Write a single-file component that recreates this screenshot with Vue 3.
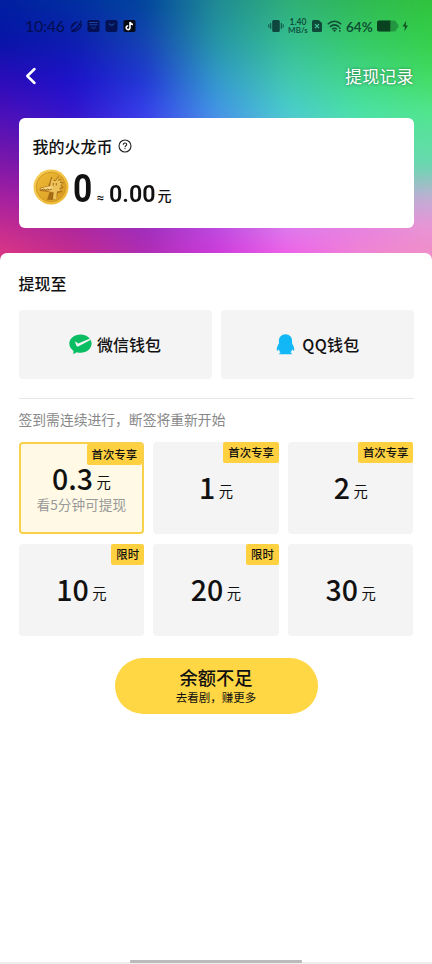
<script setup>
// The backdrop bleeds past the screen edges so that its blur never thins out at them.
const BLEED = 24
const stops = [
  { y: 0, c: ['#001fa0', '#002fa0', '#00459c', '#1f8a94', '#2fae78', '#2fb954', '#30c33c'] },
  { y: 40, c: ['#0714a8', '#0c1eae', '#1443b2', '#2595a6', '#35be90', '#37c968', '#35cf4a'] },
  { y: 80, c: ['#2c0cb8', '#1d12ca', '#2238d4', '#3399cc', '#43c8b0', '#42d988', '#43dd66'] },
  { y: 115, c: ['#4c10b8', '#3414cc', '#3840ec', '#4494e8', '#4acdd0', '#4ce2a8', '#52e690'] },
  { y: 165, c: ['#8018a8', '#7018b0', '#6030d0', '#8070e0', '#90a0d8', '#68d8b0', '#68d8b0'] },
  { y: 200, c: ['#a821a0', '#9820a0', '#8030c0', '#a050e0', '#c080e0', '#c0a8d8', '#c4acd6'] },
  { y: 228, c: ['#c42c90', '#b0289c', '#a02ebc', '#be4ae0', '#de7cec', '#e980e2', '#ea94d4'] },
  { y: 256, c: ['#dc3884', '#c62c8c', '#b02cb0', '#ce38da', '#f05ee8', '#f084d0', '#f08ec6'] },
]
const layers = stops.map((s, i) => {
  const colors = s.c.map((c, n) => `${c} ${BLEED + n * 72}px`).join(', ')
  const mask = i
    ? `linear-gradient(to bottom, transparent ${stops[i - 1].y + BLEED}px, #000 ${s.y + BLEED}px)`
    : 'none'
  return { background: `linear-gradient(to right, ${colors})`, maskImage: mask }
})

const plans = [
  { amount: '0.3', tag: '首次专享', note: '看5分钟可提现', active: true },
  { amount: '1', tag: '首次专享' },
  { amount: '2', tag: '首次专享' },
  { amount: '10', tag: '限时' },
  { amount: '20', tag: '限时' },
  { amount: '30' },
]
</script>

<template>
  <div class="screen">
    <div class="aurora">
      <div v-for="(l, i) in layers" :key="i" class="layer" :style="l"></div>
    </div>

    <div class="content">
      <header class="status">
        <span class="time">10:46</span>
        <svg class="apps" width="68" height="14" viewBox="0 0 68 14">
          <path d="M2 10.500C.3 6 5.500 1.300 10 2.600C8.500 3.600 6.500 4.600 5 6.300C3.600 7.800 2.800 9.200 2 10.500Z" fill="currentColor" />
          <path d="M2.300 11.800C6.500 13.500 12.500 9.500 12.300 4.600M2.300 11.800C6 11 10 7.500 12.300 1.800" fill="none" stroke="currentColor" stroke-width="1.400" />
          <rect x="18.500" y="1" width="12" height="12" rx="1.800" fill="currentColor" />
          <path d="M20 3.500H29M20.500 5.800H28.500M22.300 8Q24.500 11 26.700 8" fill="none" stroke="#1742a6" stroke-width="1" />
          <rect x="36.500" y="1" width="12" height="12" rx="2.200" fill="currentColor" />
          <path d="M39.800 4.500Q42.500 8 45.200 4.500" fill="none" stroke="#1c57a6" stroke-width="1.200" />
          <rect x="54.500" y="1" width="12" height="12" rx="1.800" fill="#080b16" />
          <path d="M61 3V8.700A1.900 1.900 0 1 1 59.200 6.800M61 3Q61.400 5.300 64 5.500" fill="none" stroke="#fff" stroke-width="1.600" />
        </svg>
        <span class="grow"></span>
        <svg class="vib" width="16" height="14" viewBox="0 0 16 14">
          <rect x="4.200" y="1" width="7.600" height="12" rx="1.600" fill="currentColor" />
          <path d="M2.700 4V10M.8 5.500V8.500M13.300 4V10M15.200 5.500V8.500" stroke="currentColor" stroke-width="1" />
        </svg>
        <span class="speed"><b>1.40</b><b>MB/s</b></span>
        <svg class="sim" width="10" height="12" viewBox="0 0 10 12">
          <path d="M1.500 0H6.500L10 3V10.500Q10 12 8.500 12H1.500Q0 12 0 10.500V1.500Q0 0 1.500 0Z" fill="currentColor" />
          <path d="M3 4.200L7 8.200M7 4.200L3 8.200" stroke="#46c59a" stroke-width="1.200" />
        </svg>
        <svg class="wifi" width="16" height="13" viewBox="0 0 16 13">
          <g fill="none" stroke="currentColor" stroke-width="1.500">
            <path d="M.7 4.300Q7.500 -1.800 14.300 4.300" />
            <path d="M2.900 6.900Q7.500 2.900 12.100 6.900" />
            <path d="M5 9.300Q7.500 7.100 10 9.300" />
          </g>
          <path d="M5.900 10.300Q7.500 9.200 9.100 10.300L7.500 12Z" fill="currentColor" />
          <path d="M12.800 7.300V9M12.800 10V11.700" stroke="currentColor" stroke-width="1.400" />
        </svg>
        <span class="pct">64%</span>
        <svg class="batt" width="32" height="12" viewBox="0 0 32 12">
          <path d="M2 .5H17Q19.500 .5 19.500 3L21.300 4.500V7.500L19.500 9Q19.500 11.500 17 11.500H2Q0 11.500 0 9.500V2.500Q0 .5 2 .5Z" fill="currentColor" opacity=".42" />
          <path d="M2 .5H13.300V11.500H2Q0 11.500 0 9.500V2.500Q0 .5 2 .5Z" fill="currentColor" />
          <path d="M29.300 .8L25.500 6.500H28L27.300 11.300L31 5.400H28.600Z" fill="currentColor" />
        </svg>
      </header>

      <nav class="nav">
        <svg width="12" height="18" viewBox="0 0 12 18">
          <path d="M9.500 2L2.300 9L9.500 16" fill="none" stroke="#fff" stroke-width="2.500" stroke-linecap="round" stroke-linejoin="round" />
        </svg>
        <span class="record">提现记录</span>
      </nav>

      <section class="wallet">
        <div class="wallet-title">
          <span>我的火龙币</span>
          <svg width="14" height="14" viewBox="0 0 14 14" fill="none" stroke="#222">
            <circle cx="7" cy="7" r="6" stroke-width="1.100" />
            <path d="M5.300 5.700Q5.300 4 7 4Q8.700 4 8.700 5.500Q8.700 6.400 7.600 7Q7 7.400 7 8.300M7 9.200V10.300" stroke-width="1.100" />
          </svg>
        </div>
        <div class="balance">
          <svg class="coin" width="36" height="36" viewBox="0 0 36 36">
            <defs>
              <linearGradient id="rim" x1="0" y1="0" x2="1" y2="1">
                <stop offset="0" stop-color="#f6cf59" /><stop offset="1" stop-color="#edb52f" />
              </linearGradient>
              <linearGradient id="face" x1="0" y1="0" x2="1" y2="1">
                <stop offset="0" stop-color="#efbc35" /><stop offset="1" stop-color="#d69722" />
              </linearGradient>
            </defs>
            <circle cx="18" cy="18" r="17.500" fill="url(#rim)" />
            <circle cx="18" cy="18" r="14.800" fill="url(#face)" stroke="#cf9624" stroke-width=".9" />
            <path d="M14 31L16.500 23L7 22Q5.800 19.500 7.500 18.500L15 17L17 12L18.200 7.500L20.500 11H22.500L25.500 6.500V11L28.500 9.500L27.500 13L31 13.500L28.500 16.500L31 18.500L27.500 20L29.500 23L25 24L22.500 31Z" fill="#ad7319" />
            <path d="M15.500 22.500L17 17.500L18 12.500L19.200 9L20.800 12H23L25.200 8V12L28 11L26.800 14L29.800 14.500L27 16.500L29 18L26 19L28 21.500L24 22.500L23 30.500H20L20.500 23Z" fill="#edc25a" />
            <path d="M7.500 19.200L16 17.200L20 18L19 21.500L8 21Z" fill="#f6d682" />
            <path d="M8 21L11 20L12.500 21L14.500 20L16.500 21L19 20M20.300 14V16.500M23.300 14V16.500M17.500 24L16.500 30M20 24L18.800 30" stroke="#99600f" stroke-width=".9" fill="none" />
          </svg>
          <span class="coins">0</span>
          <span class="approx">≈</span>
          <span class="cash">0.00</span>
          <span class="yuan">元</span>
        </div>
      </section>

      <main class="sheet">
        <h2>提现至</h2>
        <div class="methods">
          <div class="method">
            <svg width="23" height="21" viewBox="0 0 23 21">
              <path d="M11.500 .5C5.200 .5 .3 4.500 .3 9.600C.3 12.600 2 15.200 4.500 16.900L4.300 20.200L7.800 18.300Q9.600 18.800 11.500 18.800C17.800 18.800 22.600 14.700 22.600 9.600C22.600 4.500 17.800 .5 11.500 .5Z" fill="#09bd63" />
              <path d="M5.800 7.300L9.300 9.600L21 4.600L21.800 5.800L9.200 12.400Q7.900 12.900 7.300 11.600Z" fill="#f4f4f4" />
            </svg>
            <span>微信钱包</span>
          </div>
          <div class="method qq">
            <svg width="19" height="21" viewBox="0 0 19 21">
              <path d="M9.500 .3C5.500 .3 2.900 3.300 2.900 7V9.500C1.700 11.500 .7 13.600 .7 15.700C.7 17 1.500 17 2.700 15.600Q3.300 17.200 4.600 18.300Q3 18.800 3.300 20.300H15.700Q16 18.800 14.400 18.300Q15.700 17.200 16.300 15.600C17.500 17 18.300 17 18.300 15.700C18.300 13.600 17.300 11.500 16.100 9.500V7C16.100 3.300 13.500 .3 9.500 .3Z" fill="#12b7f5" />
            </svg>
            <span>QQ钱包</span>
          </div>
        </div>
        <p class="hint">签到需连续进行，断签将重新开始</p>
        <div class="plans">
          <div v-for="p in plans" :key="p.amount" class="plan" :class="{ active: p.active }">
            <span v-if="p.tag" class="tag">{{ p.tag }}</span>
            <div class="price"><span class="num">{{ p.amount }}</span><span class="unit">元</span></div>
            <div v-if="p.note" class="note">{{ p.note }}</div>
          </div>
        </div>
        <button class="cta">
          <span class="cta-main">余额不足</span>
          <span class="cta-sub">去看剧，赚更多</span>
        </button>
      </main>
      <footer class="home"><i></i></footer>
    </div>
  </div>
</template>

<style>
body { margin: 0; background: #fff; }
</style>

<style scoped>
.screen {
  display: grid;
  grid-template: 964px / 432px;
  width: 432px;
  height: 964px;
  overflow: hidden;
  font-family: "Noto Sans CJK SC", sans-serif;
  color: #111;
  background: #fff;
}
.aurora { grid-area: 1 / 1; display: grid; width: 480px; height: 330px; margin: -24px 0 0 -24px; filter: blur(7px); }
.layer { grid-area: 1 / 1; }
.content { grid-area: 1 / 1; display: flex; flex-direction: column; z-index: 1; min-width: 0; height: 964px; }

.status {
  box-sizing: border-box;
  height: 52px;
  padding: 0 23px 0 25px;
  display: flex;
  align-items: center;
  color: rgba(0, 25, 30, .7);
  font-family: Lato, sans-serif;
}
.time { width: 44px; font-size: 16px; font-weight: 500; line-height: 20px; letter-spacing: -.3px; color: rgba(2, 8, 50, .72); white-space: nowrap; }
.apps { color: rgba(2, 8, 60, .78); }
.grow { flex: 1; }
.speed { display: flex; flex-direction: column; align-items: center; width: 20px; margin-left: 4px; font-size: 8px; line-height: 8px; }
.speed b { font-weight: 700; white-space: nowrap; }
.speed b:first-child { font-size: 8.500px; }
.sim { margin-left: 4px; }
.wifi { margin-left: 5px; }
.pct { width: 27px; margin: 2px 0 0 3px; font-size: 13.500px; font-weight: 700; line-height: 16px; white-space: nowrap; }
.batt { margin-left: 4px; color: rgba(0, 35, 20, .72); }

.nav {
  box-sizing: border-box;
  height: 66px;
  padding: 15px 18.500px 0 25px;
  display: flex;
  justify-content: space-between;
  align-items: flex-start;
}
.record { font-size: 17px; line-height: 17px; color: #fff; letter-spacing: .1px; text-shadow: 0 0 3px rgba(0, 0, 0, .5); }

.wallet {
  box-sizing: border-box;
  height: 110px;
  margin: 0 18.500px;
  padding: 17px 15px 0 14px;
  border-radius: 6px;
  background: #fff;
}
.wallet-title { display: flex; align-items: center; gap: 5px; font-size: 16px; font-weight: 500; line-height: 22px; }
.balance { display: flex; align-items: flex-end; height: 37px; margin: 12px 0 0; }
.coin { margin-bottom: 1px; }
.coins { width: 19px; margin: 0 0 -3px 4px; font: 700 39px/39px Roboto, sans-serif; transform: scaleX(.86); transform-origin: left; }
.approx { width: 9px; margin: 0 0 1px 5px; font: 500 13px/14px Roboto, "Noto Sans", sans-serif; }
.cash { width: 46px; margin: 0 0 -2px 3px; font: 600 24.500px/28px Roboto, sans-serif; transform: scaleX(.95); transform-origin: left; }
.yuan { margin-left: 3px; font-size: 14px; font-weight: 500; line-height: 22px; }

.sheet {
  box-sizing: border-box;
  flex: 1;
  margin-top: 25px;
  padding: 18px 18.500px 0;
  border-radius: 7px 7px 0 0;
  background: #fff;
}
h2 { margin: 0; font-size: 16px; font-weight: 500; line-height: 24px; }
.methods { display: grid; grid-template-columns: 1fr 1fr; gap: 9px; margin-top: 15px; padding-bottom: 19px; border-bottom: 1px solid #e7e7e7; }
.method {
  display: flex;
  align-items: center;
  justify-content: center;
  gap: 5px;
  height: 69px;
  border-radius: 4px;
  background: #f4f4f4;
  font-size: 16px;
  font-weight: 500;
}
.method span { padding-bottom: 2px; }
.qq { gap: 7px; padding-left: 2px; box-sizing: border-box; }
.qq span { letter-spacing: .3px; }
.hint { margin: 10px 0 0; font-size: 13.800px; line-height: 20px; color: #888; }
.plans { display: grid; grid-template-columns: repeat(3, 1fr); grid-auto-rows: 92px; gap: 9.500px 9px; margin-top: 13px; }
.plan {
  position: relative;
  box-sizing: border-box;
  display: flex;
  flex-direction: column;
  align-items: center;
  justify-content: center;
  padding-bottom: 2px;
  border-radius: 4px;
  background: #f4f4f4;
}
.active { padding-bottom: 1px; border: 2px solid #f8d04a; background: #fff9e6; }
.tag {
  position: absolute;
  top: 0;
  right: 0;
  padding: 0 5px;
  border-radius: 2px;
  background: #ffd040;
  font-size: 11.400px;
  font-weight: 500;
  line-height: 21px;
}
.price { display: flex; align-items: flex-end; height: 32px; }
.num { font-size: 28.500px; font-weight: 500; line-height: 32px; }
.unit { margin-left: 3.500px; padding-bottom: 2px; font-size: 14.300px; line-height: 20px; }
.note { font-size: 13.700px; line-height: 20px; color: #999; }
.cta {
  display: flex;
  flex-direction: column;
  align-items: center;
  width: 203px;
  height: 56px;
  margin: 22.500px auto 0;
  padding: 8px 0 0;
  border: 0;
  border-radius: 28px;
  background: #ffd644;
  color: #111;
  font-family: inherit;
}
.cta-main { font-size: 18.300px; font-weight: 500; line-height: 23px; }
.cta-sub { font-size: 11.500px; line-height: 16px; }
.home { display: flex; justify-content: center; height: 4px; background: linear-gradient(#fff 2px, #eee 2px); }
.home i { width: 172px; height: 3px; border-radius: 1px; background: #bbb; }
</style>
